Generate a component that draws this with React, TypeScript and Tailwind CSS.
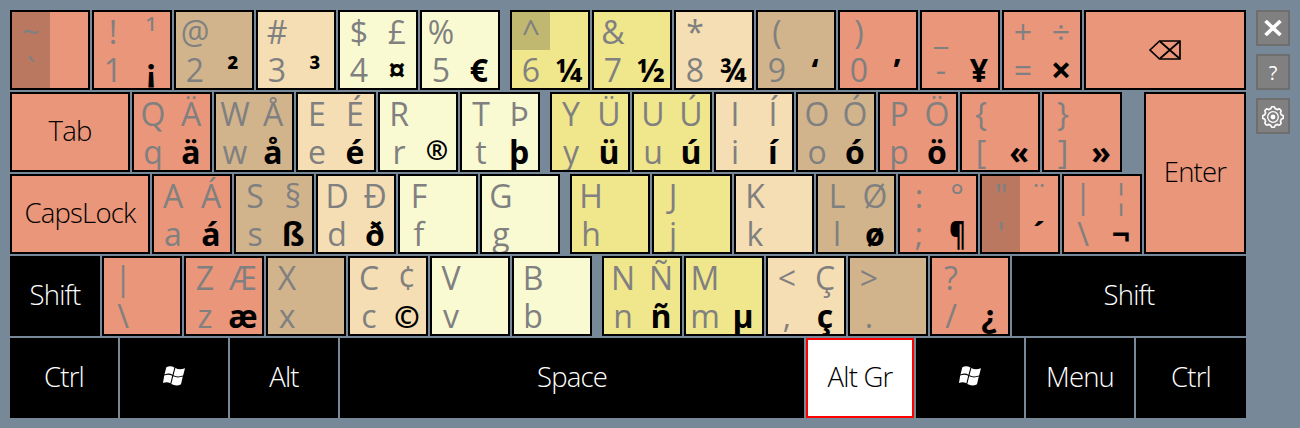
import React from "react";

type Tone = "salmon" | "tan" | "wheat" | "cream" | "khaki";

type CharKeyData = {
  tone: Tone;
  /** upper-left, upper-right, lower-left, lower-right */
  glyphs: [string, string, string, string];
  dead?: number[];
  gap?: boolean;
};

const TONES: Record<Tone, string> = {
  salmon: "bg-[#e9967a]",
  tan: "bg-[#d2b48c]",
  wheat: "bg-[#f5deb3]",
  cream: "bg-[#fafad2]",
  khaki: "bg-[#f0e68c]",
};

const k = (
  tone: Tone,
  ul: string,
  ur: string,
  ll: string,
  lr: string,
  extra: { dead?: number[]; gap?: boolean } = {}
): CharKeyData => ({ tone, glyphs: [ul, ur, ll, lr], ...extra });

const ROW1: CharKeyData[] = [
  k("salmon", "~", "", "`", "", { dead: [0, 2] }),
  k("salmon", "!", "¹", "1", "¡"),
  k("tan", "@", "", "2", "²"),
  k("wheat", "#", "", "3", "³"),
  k("cream", "$", "£", "4", "¤"),
  k("cream", "%", "", "5", "€"),
  k("khaki", "^", "", "6", "¼", { dead: [0], gap: true }),
  k("khaki", "&", "", "7", "½"),
  k("wheat", "*", "", "8", "¾"),
  k("tan", "(", "", "9", "‘"),
  k("salmon", ")", "", "0", "’"),
  k("salmon", "_", "", "-", "¥"),
  k("salmon", "+", "÷", "=", "×"),
];

const ROW2: CharKeyData[] = [
  k("salmon", "Q", "Ä", "q", "ä"),
  k("tan", "W", "Å", "w", "å"),
  k("wheat", "E", "É", "e", "é"),
  k("cream", "R", "", "r", "®"),
  k("cream", "T", "Þ", "t", "þ"),
  k("khaki", "Y", "Ü", "y", "ü", { gap: true }),
  k("khaki", "U", "Ú", "u", "ú"),
  k("wheat", "I", "Í", "i", "í"),
  k("tan", "O", "Ó", "o", "ó"),
  k("salmon", "P", "Ö", "p", "ö"),
  k("salmon", "{", "", "[", "«"),
  k("salmon", "}", "", "]", "»"),
];

const ROW3: CharKeyData[] = [
  k("salmon", "A", "Á", "a", "á"),
  k("tan", "S", "§", "s", "ß"),
  k("wheat", "D", "Ð", "d", "ð"),
  k("cream", "F", "", "f", ""),
  k("cream", "G", "", "g", ""),
  k("khaki", "H", "", "h", "", { gap: true }),
  k("khaki", "J", "", "j", ""),
  k("wheat", "K", "", "k", ""),
  k("tan", "L", "Ø", "l", "ø"),
  k("salmon", ":", "°", ";", "¶"),
  k("salmon", '"', "¨", "'", "´", { dead: [0, 2] }),
  k("salmon", "|", "¦", "\\", "¬"),
];

const ROW4: CharKeyData[] = [
  k("salmon", "|", "", "\\", ""),
  k("salmon", "Z", "Æ", "z", "æ"),
  k("tan", "X", "", "x", ""),
  k("wheat", "C", "¢", "c", "©"),
  k("cream", "V", "", "v", ""),
  k("cream", "B", "", "b", ""),
  k("khaki", "N", "Ñ", "n", "ñ", { gap: true }),
  k("khaki", "M", "", "m", "µ"),
  k("wheat", "<", "Ç", ",", "ç"),
  k("tan", ">", "", ".", ""),
  k("salmon", "?", "", "/", "¿"),
];

/** Symbols whose default shape needs a different size or width. */
const GLYPH_STYLES: Record<string, string> = {
  "®": "text-[27px] font-bold -mt-0.5",
  "©": "text-[31px] font-bold",
  "¶": "scale-x-[0.8]",
  "×": "text-[36px]",
  "²": "text-[30px]",
  "³": "text-[30px]",
};

function CharKey({ data }: { data: CharKeyData }) {
  return (
    <div
      className={`grid h-20 w-20 shrink-0 grid-cols-[38px_38px] grid-rows-[38px_38px] overflow-hidden border-2 border-black text-[32px] leading-[40px] ${TONES[data.tone]} ${data.gap ? "ml-2" : ""}`}
    >
      {data.glyphs.map((g, i) => (
        <div
          key={i}
          className={`flex justify-center whitespace-nowrap ${i === 3 ? "font-bold text-black" : "text-[#808080]"} ${data.dead?.includes(i) ? "bg-black/20" : ""}`}
        >
          <span className={`leading-[40px] ${GLYPH_STYLES[g] ?? ""}`}>{g}</span>
        </div>
      ))}
    </div>
  );
}

function WideKey({ className, children }: { className: string; children: React.ReactNode }) {
  return (
    <div
      className={`flex shrink-0 items-center justify-center border-2 pb-[3px] text-[27.5px] leading-none font-light tracking-[-0.8px] whitespace-nowrap ${className}`}
    >
      <span className="flex">{children}</span>
    </div>
  );
}

const SALMON_KEY = "border-black bg-[#e9967a] text-black";
const BLACK_KEY = "border-black bg-black text-white";

function Row({ children }: { children: React.ReactNode }) {
  return <div className="flex h-20 gap-[2px]">{children}</div>;
}

const chars = (row: CharKeyData[]) => row.map((d, i) => <CharKey key={i} data={d} />);

function WindowsLogo() {
  return (
    <svg className="mb-0.5 h-5 w-[22px]" viewBox="0 0 22 20" fill="currentColor">
      <path d="M3.3 1.2C6 0 8.600 0 11.400 1.500L9.500 8.700C7 7.300 4.500 7.300 1.500 8.500Z" />
      <path d="M12.400 2C15 3.500 18 3.600 22 2.300L20.100 9.600C17 10.800 13.500 10.700 10.500 9.200Z" />
      <path d="M1.200 9.500C4 8.300 6.700 8.400 9.200 9.700L7.400 17.300C5 15.900 2.500 15.900 0 17.100Z" />
      <path d="M10.200 10.300C13 11.700 16 11.800 19.800 10.600L18 18.200C15 19.900 11.500 19.800 8.300 18Z" />
    </svg>
  );
}

function EraseIcon() {
  return (
    <svg
      className="mt-[2px] mr-px h-5 w-8"
      viewBox="0 0 32 20"
      fill="none"
      stroke="currentColor"
      strokeWidth="1.700"
    >
      <path d="M1 10L10.500 1H31V19H10.500Z" />
      <path d="M11 1.500L30.500 18.500M30.500 1.500L11 18.500" />
    </svg>
  );
}

function CloseIcon() {
  return (
    <svg className="h-4 w-[18px]" viewBox="0 0 18 16" stroke="currentColor" strokeWidth="3.600" fill="none">
      <path d="M1.500 1L16.500 15M16.500 1L1.500 15" />
    </svg>
  );
}

const TEETH = Array.from({ length: 97 }, (_, i) => {
  const a = (i / 96) * Math.PI * 2;
  const r = 9.400 + 0.900 * Math.tanh(2.500 * Math.cos(a * 8));
  return `${i ? "L" : "M"}${(11 + r * Math.sin(a)).toFixed(2)} ${(11 - r * Math.cos(a)).toFixed(2)}`;
}).join("");

function GearIcon() {
  return (
    <svg className="mt-0.5 size-[22px]" viewBox="0 0 22 22" fill="none" stroke="currentColor">
      <path d={TEETH} strokeWidth="1.700" />
      <circle cx="11" cy="11" r="5.300" strokeWidth="1.300" />
      <circle cx="11" cy="11" r="2.400" fill="currentColor" stroke="none" />
    </svg>
  );
}

function SideButton({ label, children }: { label: string; children: React.ReactNode }) {
  return (
    <button
      aria-label={label}
      className="flex h-9 w-[34px] items-center justify-center border-2 border-[#6e6e6e] bg-[#808080] text-white"
    >
      {children}
    </button>
  );
}

export default function App() {
  return (
    <div className="flex h-[428px] w-[1300px] gap-[10px] overflow-hidden bg-[#778899] p-[10px] font-['Open_Sans','Noto_Sans',sans-serif]">
      <div className="flex w-[1236px] flex-col gap-[2px]">
        <Row>
          {chars(ROW1)}
          <WideKey className={`w-[162px] ${SALMON_KEY}`}>
            <EraseIcon />
          </WideKey>
        </Row>
        <div className="flex justify-between">
          <div className="flex flex-col gap-[2px]">
            <Row>
              <WideKey className={`w-[120px] ${SALMON_KEY}`}>Tab</WideKey>
              {chars(ROW2)}
            </Row>
            <Row>
              <WideKey className={`w-[140px] ${SALMON_KEY}`}>CapsLock</WideKey>
              {chars(ROW3)}
            </Row>
          </div>
          <WideKey className={`w-[102px] ${SALMON_KEY}`}>Enter</WideKey>
        </div>
        <Row>
          <WideKey className={`w-[90px] ${BLACK_KEY}`}>Shift</WideKey>
          {chars(ROW4)}
          <WideKey className={`w-[234px] ${BLACK_KEY}`}>Shift</WideKey>
        </Row>
        <Row>
          <WideKey className={`w-[108px] ${BLACK_KEY}`}>Ctrl</WideKey>
          <WideKey className={`w-[108px] ${BLACK_KEY}`}>
            <WindowsLogo />
          </WideKey>
          <WideKey className={`w-[108px] ${BLACK_KEY}`}>Alt</WideKey>
          <WideKey className={`w-[464px] ${BLACK_KEY}`}>Space</WideKey>
          <WideKey className="w-[108px] border-[#ff0000] bg-white text-black">Alt Gr</WideKey>
          <WideKey className={`w-[108px] ${BLACK_KEY}`}>
            <WindowsLogo />
          </WideKey>
          <WideKey className={`w-[108px] ${BLACK_KEY}`}>Menu</WideKey>
          <WideKey className={`w-[110px] ${BLACK_KEY}`}>Ctrl</WideKey>
        </Row>
      </div>
      <div className="flex flex-col gap-2">
        <SideButton label="Close">
          <CloseIcon />
        </SideButton>
        <SideButton label="Help">
          <span className="pt-px text-[20px] leading-none">?</span>
        </SideButton>
        <SideButton label="Settings">
          <GearIcon />
        </SideButton>
      </div>
    </div>
  );
}
